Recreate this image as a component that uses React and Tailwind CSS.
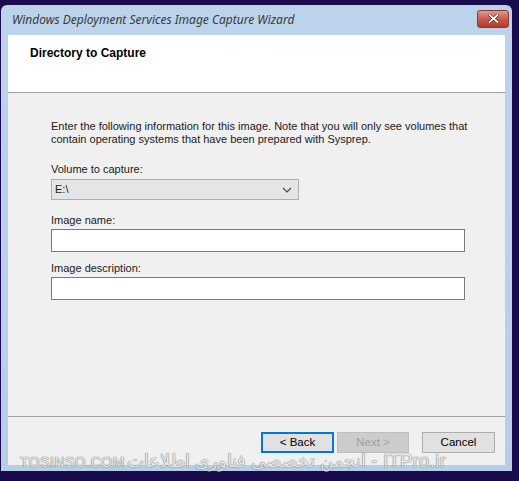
export default function App() {
  const ui = { fontFamily: '"Liberation Sans", Arial, sans-serif' };

  return (
    <div className="relative h-[481px] w-[519px] overflow-hidden bg-[#1a0c4c] pl-[1px] pt-[5px]" style={ui}>
      {/* Window frame */}
      <div className="flex h-[466px] w-[511px] flex-col rounded-t-[6px] bg-gradient-to-b from-[#bcd3eb] to-[#b6cfe9] px-[7px] pb-[6px]">
        {/* Title bar */}
        <div className="flex h-[30px] shrink-0 items-center justify-between pl-[4px]">
          <span className="text-[12px] italic text-[#3a3a3a]" style={{ fontFamily: '"Noto Sans", sans-serif' }}>
            Windows Deployment Services Image Capture Wizard
          </span>
          <button className="mt-[-3px] mr-[-4px] flex h-[18px] w-[32px] items-center justify-center rounded-[3px] border border-[#8a3a32] bg-gradient-to-b from-[#e29a90] via-[#c9594d] to-[#b8382b]">
            <svg width="11" height="9" viewBox="0 0 11 9">
              <path d="M1.5 1 L9.5 8 M9.5 1 L1.5 8" stroke="#5a1a14" strokeWidth="3" strokeLinecap="square" />
              <path d="M1.5 1 L9.5 8 M9.5 1 L1.5 8" stroke="#ffffff" strokeWidth="1.8" strokeLinecap="square" />
            </svg>
          </button>
        </div>

        {/* Client area */}
        <div className="flex flex-1 flex-col bg-[#f0f0f0]">
          {/* Header */}
          <div className="h-[58px] shrink-0 border-b border-[#a0a0a0] bg-white pl-[22px] pt-[9px]">
            <h1 className="text-[12px] font-bold text-black">Directory to Capture</h1>
          </div>

          {/* Body */}
          <div className="flex h-[323px] shrink-0 flex-col pl-[43px] pr-[30px] pt-[27px] text-[11px] leading-[13px] text-[#1a1a1a]">
            <p className="w-[430px]">
              Enter the following information for this image. Note that you will only see volumes that
              <br />
              contain operating systems that have been prepared with Sysprep.
            </p>

            <label className="mt-[17px] block">Volume to capture:</label>
            <div className="mt-[3px] flex h-[21px] w-[248px] items-center justify-between border border-[#adadad] bg-[#e5e5e5] pl-[3px] pr-[6px]">
              <span>E:\</span>
              <svg width="10" height="6" viewBox="0 0 10 6">
                <path d="M1 1 L5 5 L9 1" fill="none" stroke="#444" strokeWidth="1.1" />
              </svg>
            </div>

            <label className="mt-[14px] block">Image name:</label>
            <div className="mt-[2px] h-[23px] w-[414px] border border-[#7a7a7a] bg-white" />

            <label className="mt-[10px] block">Image description:</label>
            <div className="mt-[2px] h-[23px] w-[414px] border border-[#7a7a7a] bg-white" />
          </div>

          {/* Footer */}
          <div className="flex flex-1 items-start border-t border-[#a0a0a0] pl-[253px] pt-[15px] text-[11.5px]">
            <button className="flex h-[21px] w-[73px] items-center justify-center border-2 border-[#0078d7] bg-[#e1e1e1] text-black">
              &lt; Back
            </button>
            <button className="ml-[3px] flex h-[21px] w-[72px] items-center justify-center border border-[#bfbfbf] bg-[#cccccc] text-[#a0a0a0]">
              Next &gt;
            </button>
            <button className="ml-[13px] flex h-[21px] w-[73px] items-center justify-center border border-[#adadad] bg-[#e1e1e1] text-black">
              Cancel
            </button>
          </div>
        </div>
      </div>

      {/* Watermark */}
      <div
        className="pointer-events-none absolute left-[20px] top-[448px] flex items-baseline gap-[2px] text-[#e8e8e8] opacity-80"
        style={{ textShadow: "0 0 1px #555, 0 0 1px #555" }}
      >
        <span className="text-[14px] tracking-[0.5px]">TOSINSO.COM</span>
        <span dir="rtl" className="text-[18px] tracking-[0.5px]">ITPro.ir - انجمن تخصصی فناوری اطلاعات</span>
      </div>
    </div>
  );
}
